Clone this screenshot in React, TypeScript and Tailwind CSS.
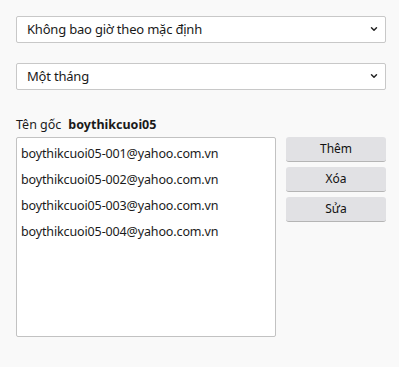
import { ChevronDown } from "lucide-react";

const emails = [
  "boythikcuoi05-001@yahoo.com.vn",
  "boythikcuoi05-002@yahoo.com.vn",
  "boythikcuoi05-003@yahoo.com.vn",
  "boythikcuoi05-004@yahoo.com.vn",
];

function SelectBox({ label }: { label: string }) {
  return (
    <div className="flex h-[27px] items-center justify-between rounded-[2px] border border-[#c8c8c8] bg-white pl-[10px] pr-[6px] text-[13px] tracking-[-0.2px] text-[#1a1a1a]">
      <span>{label}</span>
      <ChevronDown className="mb-[2px] h-[10px] w-[10px] text-[#222]" strokeWidth={3.5} />
    </div>
  );
}

function SideButton({ label }: { label: string }) {
  return (
    <button
      type="button"
      className="h-[25px] w-full rounded-[3px] border-b border-[#b5b5b5] bg-[#e1e1e4] text-[12px] text-[#111]"
    >
      {label}
    </button>
  );
}

export default function App() {
  return (
    <div
      className="h-[367px] w-[399px] bg-[#f9f9f9] pl-[16px] pr-[13px] pt-[16px]"
      style={{ fontFamily: '"Noto Sans", "Open Sans", sans-serif' }}
    >
      <SelectBox label="Không bao giờ theo mặc định" />
      <div className="mt-[20px]">
        <SelectBox label="Một tháng" />
      </div>

      <div className="mt-[26px] flex items-baseline gap-[7px] text-[12.5px] text-[#1a1a1a]">
        <span>Tên gốc</span>
        <span className="font-bold">boythikcuoi05</span>
      </div>

      <div className="mt-[2px] flex gap-[10px]">
        <div className="h-[200px] w-[260px] rounded-[2px] border border-[#c2c2c2] bg-white px-[4px] pt-[3px]">
          {emails.map((e) => (
            <div key={e} className="h-[26px] leading-[26px] text-[12.5px] tracking-[-0.13px] text-[#1a1a1a]">
              {e}
            </div>
          ))}
        </div>
        <div className="flex w-[100px] flex-col gap-[5px]">
          <SideButton label="Thêm" />
          <SideButton label="Xóa" />
          <SideButton label="Sửa" />
        </div>
      </div>
    </div>
  );
}
